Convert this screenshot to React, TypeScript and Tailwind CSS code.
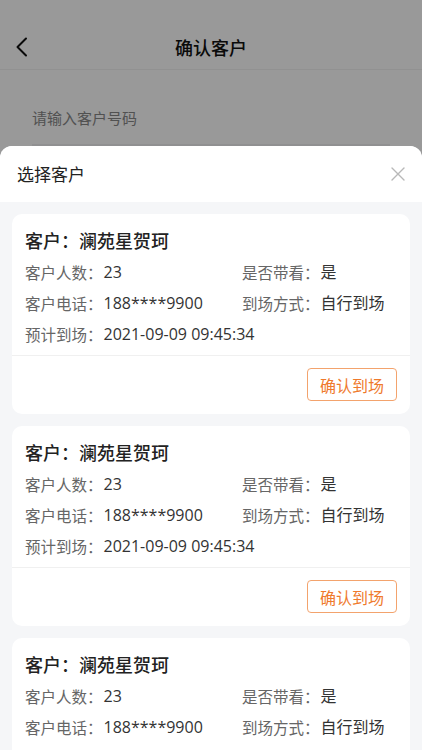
import React from "react";

const font = { fontFamily: '"Noto Sans CJK SC", "Noto Sans", sans-serif' };

function V({ children }: { children: React.ReactNode }) {
  return (
    <span className="text-[#333] text-[16px] leading-[20px] ml-[1px] font-['Open_Sans','Noto_Sans_CJK_SC',sans-serif]">{children}</span>
  );
}

function L({ children }: { children: React.ReactNode }) {
  return <span className="text-[#666] leading-[20px]">{children}</span>;
}

function Row({ children, wide }: { children: React.ReactNode; wide?: boolean }) {
  return <div className={wide ? "col-span-2 h-[31px] flex items-center" : "h-[31px] flex items-center"}>{children}</div>;
}

function Card() {
  return (
    <div className="bg-white rounded-[10px] overflow-hidden">
      <div className="px-[13px] pt-[14px] pb-[6px]">
        <div className="text-[18px] leading-[24px] font-medium text-[#222]">客户：澜苑星贺珂</div>
        <div className="mt-[4px] grid grid-cols-[217px_1fr] text-[15.5px]">
          <Row><L>客户人数：</L><V>23</V></Row>
          <Row><L>是否带看：</L><V>是</V></Row>
          <Row><L>客户电话：</L><V>188****9900</V></Row>
          <Row><L>到场方式：</L><V>自行到场</V></Row>
          <Row wide><L>预计到场：</L><V>2021-09-09 09:45:34</V></Row>
        </div>
      </div>
      <div className="border-t border-[#f0f0f0] flex justify-end px-[13px] pt-[12px] pb-[13px]">
        <button className="w-[90px] h-[33px] rounded-[4px] border border-[#f3a36d] text-[#ef7a2c] text-[16px] leading-none">确认到场</button>
      </div>
    </div>
  );
}

export default function App() {
  return (
    <div className="relative h-[750px] w-[422px] overflow-hidden bg-white" style={font}>
      {/* underlying page */}
      <div className="h-[24px]" />
      <div className="relative h-[46px] flex items-center justify-center border-b border-[#f2f2f2]">
        <svg className="absolute left-[15px] top-[13px]" width="14" height="20" viewBox="0 0 14 20" fill="none">
          <path d="M11 1.5L2.5 10L11 18.5" stroke="#111" strokeWidth="2" strokeLinecap="round" strokeLinejoin="round" />
        </svg>
        <span className="text-[18px] font-medium text-[#111] leading-none">确认客户</span>
      </div>
      <div className="px-[32px] pt-[36px]">
        <div className="text-[15px] leading-[24px] text-[#888]">请输入客户号码</div>
        <div className="mt-[14px] h-[44px] bg-[#f0f0f2]" />
      </div>

      {/* mask */}
      <div className="absolute inset-0 bg-black/40" />

      {/* bottom sheet */}
      <div className="absolute left-0 right-0 top-[146px] bottom-0 rounded-t-[12px] bg-[#f5f6f8] overflow-hidden flex flex-col">
        <div className="bg-white h-[56px] flex items-center justify-between pl-[17px] pr-[17px] shrink-0">
          <span className="text-[17px] text-[#222]">选择客户</span>
          <svg width="14" height="14" viewBox="0 0 14 14" fill="none">
            <path d="M1 1L13 13M13 1L1 13" stroke="#b8b8b8" strokeWidth="1.4" strokeLinecap="round" />
          </svg>
        </div>
        <div className="px-[12px] pt-[12px] flex flex-col gap-[12px]">
          <Card />
          <Card />
          <Card />
        </div>
      </div>
    </div>
  );
}
